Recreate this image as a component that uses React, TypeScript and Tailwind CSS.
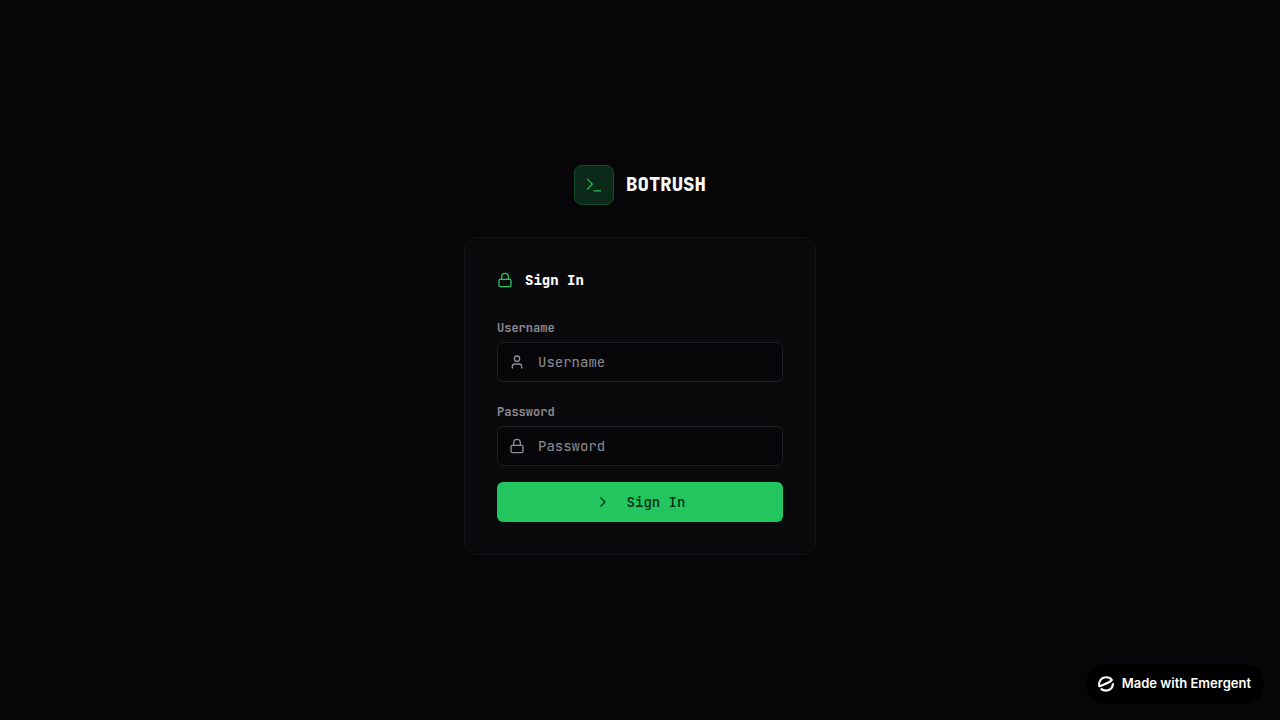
import React, { useState } from "react";
import { ChevronRight, Lock, Terminal, User } from "lucide-react";

interface FieldProps {
  id: string;
  label: string;
  type: string;
  value: string;
  icon: React.ReactNode;
  onChange: (value: string) => void;
}

const Field = ({ id, label, type, value, icon, onChange }: FieldProps) => {
  return (
    <div>
      <label
        htmlFor={id}
        className="block text-xs leading-7 font-semibold text-[#8a8a90]"
      >
        {label}
      </label>
      <div className="relative text-[#8e8e94]">
        <span className="pointer-events-none absolute inset-y-0 left-3 flex items-center">
          {icon}
        </span>
        <input
          id={id}
          type={type}
          value={value}
          placeholder={label}
          onChange={(e) => onChange(e.target.value)}
          className="block h-10 w-full rounded-md border border-[#1f1f23] bg-[#07070a] pr-3 pl-10 text-sm text-[#fafafa] outline-none placeholder:text-[#8e8e94] focus:border-[#22c55e]"
        />
      </div>
    </div>
  );
};

const EmergentBadge = () => {
  return (
    <a
      href="#"
      className="fixed right-4 bottom-4 flex h-10 items-center gap-2 rounded-full bg-black pr-[13px] pl-3 font-['Inter',sans-serif] text-[13px] font-semibold text-white"
    >
      <svg width="16" height="16" viewBox="0 0 16 16" fill="none">
        <path
          d="M1.4 10.4C.2 5.6 3.2 1.3 8.2 1.3c2.6 0 4.6 1 5.7 2.7C11.6 6.6 6.6 8.4 1.4 10.4Z"
          stroke="currentColor"
          strokeWidth="2"
          strokeLinejoin="round"
        />
        <path
          d="M14.9 7.2c.3 4.4-2.8 7.5-6.7 7.5-2.2 0-4-.7-5.4-2.1"
          stroke="currentColor"
          strokeWidth="2.2"
        />
      </svg>
      Made with Emergent
    </a>
  );
};

const App = () => {
  const [username, setUsername] = useState("");
  const [password, setPassword] = useState("");

  return (
    <div className="flex min-h-screen items-center justify-center bg-[#060609] p-4 font-['JetBrains_Mono','DejaVu_Sans_Mono',monospace] text-[#fafafa]">
      <main className="w-full max-w-[352px]">
        <div className="mb-8 flex items-center justify-center gap-3">
          <div className="flex size-10 items-center justify-center rounded-lg border border-[#164d2b] bg-[#0b2918]">
            <Terminal className="size-5 text-[#22c55e]" strokeWidth={1.5} />
          </div>
          <h1 className="text-[19px] leading-7 font-extrabold">BOTRUSH</h1>
        </div>

        <div className="rounded-xl border border-[#121216] bg-[#0a0a0d] p-8">
          <div className="mb-6 flex items-center gap-3">
            <Lock className="size-4 text-[#22c55e]" strokeWidth={2} />
            <h2 className="text-sm font-extrabold">Sign In</h2>
          </div>
          <form
            onSubmit={(e) => e.preventDefault()}
            className="flex flex-col gap-4"
          >
            <Field
              id="username"
              label="Username"
              type="text"
              value={username}
              icon={<User className="size-4" strokeWidth={2} />}
              onChange={setUsername}
            />
            <Field
              id="password"
              label="Password"
              type="password"
              value={password}
              icon={<Lock className="size-4" strokeWidth={2} />}
              onChange={setPassword}
            />
            <button
              type="submit"
              className="flex h-10 items-center justify-center gap-4 rounded-md bg-[#22c55e] text-sm font-medium text-[#052e16] hover:bg-[#1fb355]"
            >
              <ChevronRight className="size-4" strokeWidth={2} />
              Sign In
            </button>
          </form>
        </div>
      </main>
      <EmergentBadge />
    </div>
  );
};

export default App;
